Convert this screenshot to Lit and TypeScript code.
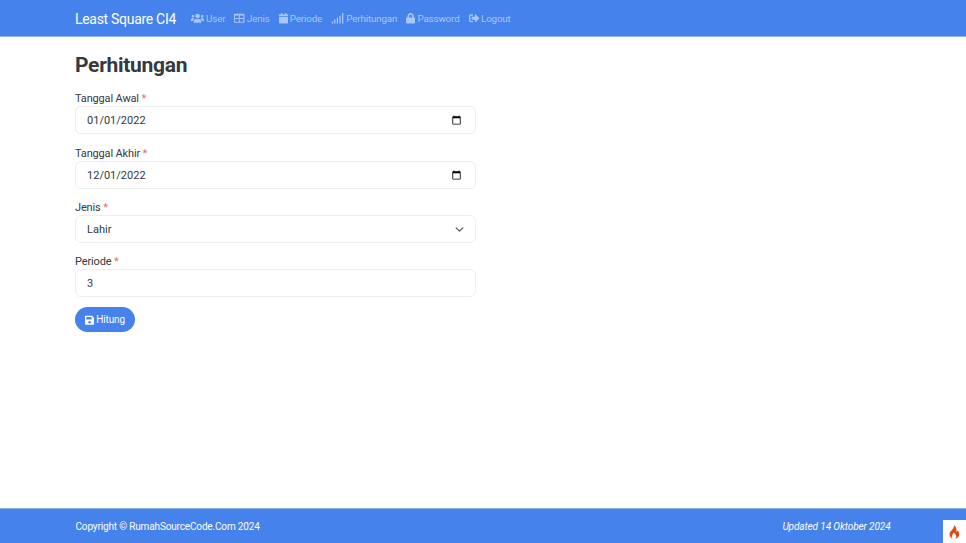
import { LitElement, html, css } from "lit";
import { customElement } from "lit/decorators.js";

const icon = (vb: string, d: string) =>
  html`<svg class="ico" viewBox="${vb}" aria-hidden="true"><path fill="currentColor" d="${d}"></path></svg>`;

const icons = {
  users: icon("0 0 640 512", "M96 224a64 64 0 1 0 0-128 64 64 0 0 0 0 128zm448 0a64 64 0 1 0 0-128 64 64 0 0 0 0 128zm32 32h-64c-17.600 0-33.500 7.100-45.100 18.600 40.300 22.100 68.900 62 75.100 109.400h66c17.700 0 32-14.300 32-32v-32c0-35.300-28.700-64-64-64zm-256 0a112 112 0 1 0 0-224 112 112 0 0 0 0 224zm76.800 32h-8.300c-20.800 10-43.900 16-68.500 16s-47.600-6-68.500-16h-8.300C179.600 288 128 339.600 128 403.200V432c0 26.500 21.500 48 48 48h288c26.500 0 48-21.500 48-48v-28.800c0-63.600-51.600-115.200-115.200-115.200zm-223.700-13.400C161.500 263.100 145.600 256 128 256H64c-35.300 0-64 28.700-64 64v32c0 17.700 14.300 32 32 32h65.900c6.300-47.400 34.900-87.300 75.200-109.400z"),
  table: icon("0 0 512 512", "M464 32H48C21.490 32 0 53.490 0 80v352c0 26.510 21.490 48 48 48h416c26.510 0 48-21.490 48-48V80c0-26.510-21.490-48-48-48zM232 432H54a6 6 0 0 1-6-6V296h184v136zm0-184H48V126a6 6 0 0 1 6-6h178v128zm232 178a6 6 0 0 1-6 6H280V296h184v130zm0-178H280V120h178a6 6 0 0 1 6 6v122z"),
  calendar: icon("0 0 448 512", "M12 192h424c6.600 0 12 5.400 12 12v260c0 26.500-21.500 48-48 48H48c-26.500 0-48-21.500-48-48V204c0-6.600 5.400-12 12-12zm436-44v-36c0-26.500-21.500-48-48-48h-48V12c0-6.600-5.400-12-12-12h-40c-6.600 0-12 5.400-12 12v52H160V12c0-6.600-5.400-12-12-12h-40c-6.600 0-12 5.400-12 12v52H48C21.500 64 0 85.500 0 112v36c0 6.600 5.400 12 12 12h424c6.600 0 12-5.400 12-12z"),
  signal: icon("-40 0 640 512", "M48 416H0v96h64v-80c0-8.800-7.200-16-16-16zm128-96h-48c-8.800 0-16 7.200-16 16v176h64V320zm128-96h-48c-8.800 0-16 7.200-16 16v272h64V224zm128-96h-48c-8.800 0-16 7.200-16 16v368h64V128zM560 0h-48c-8.800 0-16 7.200-16 16v496h64V0z"),
  lock: icon("0 0 448 512", "M400 224h-24v-72C376 68.200 307.800 0 224 0S72 68.200 72 152v72H48c-26.500 0-48 21.500-48 48v192c0 26.500 21.500 48 48 48h352c26.500 0 48-21.500 48-48V272c0-26.500-21.500-48-48-48zm-104 0H152v-72c0-39.700 32.300-72 72-72s72 32.300 72 72v72z"),
  logout: icon("0 0 512 512", "M497 273L329 441c-15 15-41 4.500-41-17v-96H152c-13.300 0-24-10.700-24-24v-96c0-13.300 10.700-24 24-24h136V88c0-21.400 25.900-32 41-17l168 168c9.300 9.400 9.300 24.600 0 34zM192 436v-40c0-6.600-5.400-12-12-12H96c-17.700 0-32-14.300-32-32V160c0-17.700 14.300-32 32-32h84c6.600 0 12-5.400 12-12V76c0-6.600-5.400-12-12-12H96c-53 0-96 43-96 96v192c0 53 43 96 96 96h84c6.600 0 12-5.400 12-12z"),
  save: icon("0 0 448 512", "M433.900 129.900l-83.900-83.900A48 48 0 0 0 316.100 32H48C21.490 32 0 53.490 0 80v352c0 26.510 21.490 48 48 48h352c26.510 0 48-21.490 48-48V163.900a48 48 0 0 0-14.100-34zM224 416c-35.350 0-64-28.650-64-64 0-35.350 28.650-64 64-64s64 28.650 64 64c0 35.350-28.650 64-64 64zm96-304.500V212c0 6.630-5.370 12-12 12H76c-6.630 0-12-5.370-12-12V108c0-6.630 5.370-12 12-12h228.500c3.180 0 6.240 1.260 8.490 3.510l3.480 3.480A12 12 0 0 1 320 111.500z"),
};

const links = [
  ["User", icons.users],
  ["Jenis", icons.table],
  ["Periode", icons.calendar],
  ["Perhitungan", icons.signal],
  ["Password", icons.lock],
  ["Logout", icons.logout],
] as const;

@customElement("app-root")
export class AppRoot extends LitElement {
  static styles = css`
    :host {
      display: flex;
      flex-direction: column;
      min-height: 543px;
      font-family: Roboto, "Noto Sans", sans-serif;
      color: #343a40;
      background: #fff;
    }
    .ico { height: 10.5px; width: auto; display: block; flex: none; }
    .nav {
      box-sizing: border-box;
      height: 37px;
      padding: 1px 75px 0;
      border-bottom: 1px solid #8cb4f5;
      background: #4582ec;
      display: flex;
      align-items: center;
    }
    .brand { color: #fff; font-size: 14px; letter-spacing: -0.3px; margin-right: 15px; }
    .links { display: flex; gap: 9px; }
    .link {
      display: flex;
      align-items: center;
      gap: 2px;
      color: rgba(255, 255, 255, 0.55);
      text-decoration: none;
      font-size: 9.8px;
      letter-spacing: -0.15px;
    }
    main { flex: 1; padding: 0 75px; }
    h1 {
      margin: 0;
      padding-top: 15px;
      font-size: 21px;
      line-height: 26px;
      font-weight: 700;
      letter-spacing: -0.3px;
      color: #343a40;
    }
    form { width: 401px; display: flex; flex-direction: column; }
    .field { display: flex; flex-direction: column; margin-top: 11.4px; }
    .field:first-child { margin-top: 13.2px; }
    label { font-size: 11px; letter-spacing: -0.15px; line-height: 15px; color: #343a40; }
    .req { color: #e0726e; }
    input, select {
      box-sizing: border-box;
      height: 28px;
      width: 100%;
      border: 1px solid #eceef1;
      border-radius: 6px;
      background: #fff;
      color: #343a40;
      font-family: inherit;
      font-size: 11px;
      padding: 1px 11px 0;
      outline: none;
    }
    input::-webkit-datetime-edit-text,
    input::-webkit-datetime-edit-month-field,
    input::-webkit-datetime-edit-day-field,
    input::-webkit-datetime-edit-year-field { padding: 0; }
    select {
      appearance: none;
      background-image: url("data:image/svg+xml,%3csvg xmlns='http://www.w3.org/2000/svg' viewBox='0 0 16 16'%3e%3cpath fill='none' stroke='%23495057' stroke-linecap='round' stroke-linejoin='round' stroke-width='2' d='m2 5 6 6 6-6'/%3e%3c/svg%3e");
      background-repeat: no-repeat;
      background-position: right 12px center;
      background-size: 8.5px 8.5px;
    }
    .actions { margin-top: 10px; }
    button {
      display: inline-flex;
      align-items: center;
      gap: 2px;
      height: 25px;
      width: 60px;
      justify-content: center;
      padding: 0;
      border: none;
      border-radius: 12.5px;
      background: #4582ec;
      color: #fff;
      font-family: inherit;
      font-size: 10px;
      letter-spacing: -0.1px;
    }
    footer {
      height: 35px;
      box-sizing: border-box;
      border-top: 1px solid #8cb4f5;
      background: #4582ec;
      color: #fff;
      display: flex;
      align-items: center;
      justify-content: space-between;
      padding: 0 75.5px;
      font-size: 10px;
      letter-spacing: -0.15px;
      position: relative;
    }
    .updated { font-style: italic; letter-spacing: -0.1px; }
    .toolbar {
      position: absolute;
      right: 0;
      bottom: 0;
      width: 23px;
      height: 23px;
      background: #fff;
      display: flex;
      align-items: center;
      justify-content: center;
    }
    .toolbar svg { width: 11px; height: 14px; display: block; }
  `;

  render() {
    return html`
      <nav class="nav">
        <span class="brand">Least Square CI4</span>
        <div class="links">
          ${links.map(([t, i]) => html`<a class="link" href="#">${i}${t}</a>`)}
        </div>
      </nav>
      <main>
        <h1>Perhitungan</h1>
        <form @submit=${(e: Event) => e.preventDefault()}>
          <div class="field">
            <label>Tanggal Awal <span class="req">*</span></label>
            <input type="date" value="2022-01-01" />
          </div>
          <div class="field">
            <label>Tanggal Akhir <span class="req">*</span></label>
            <input type="date" value="2022-12-01" />
          </div>
          <div class="field">
            <label>Jenis <span class="req">*</span></label>
            <select><option>Lahir</option></select>
          </div>
          <div class="field">
            <label>Periode <span class="req">*</span></label>
            <input type="text" value="3" />
          </div>
          <div class="actions"><button type="submit">${icons.save}Hitung</button></div>
        </form>
      </main>
      <footer>
        <span>Copyright © RumahSourceCode.Com 2024</span>
        <span class="updated">Updated 14 Oktober 2024</span>
        <div class="toolbar">
          <svg viewBox="0 0 22 28" aria-hidden="true">
            <path fill="#dd4814" d="M10 0c1 4-1 6-3.500 9C4 12 1 15 1 19c0 4.500 3.500 8 7 9-2-1.500-3-3.500-2.500-6 .5-2.500 3-4 4-7 2 2 5 5 5 8 0 2-1 4-3 5 4-.5 9-4 9-9.500 0-4-2-6-3-8-.5 1.500-1 2.500-2.500 3C15.500 8 14 3 10 0z"></path>
          </svg>
        </div>
      </footer>
    `;
  }
}
